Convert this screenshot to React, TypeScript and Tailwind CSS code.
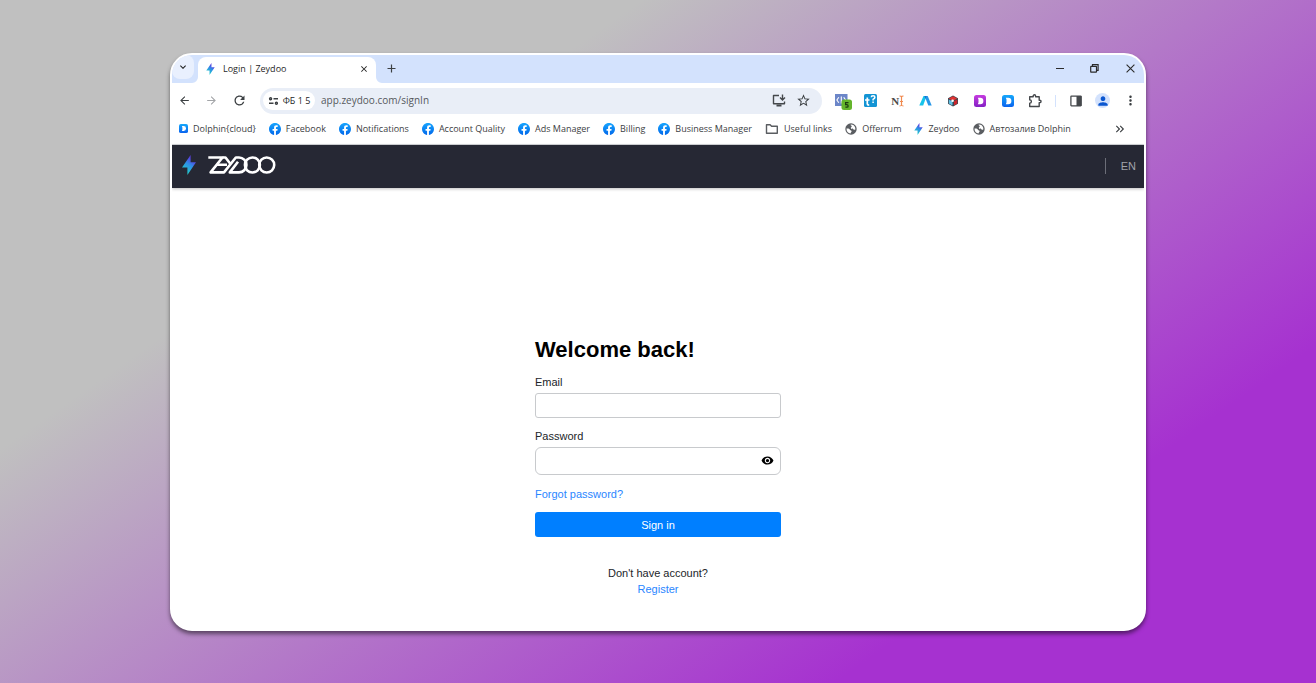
import { useState, type ReactNode } from "react";
import {
  MdArrowBack,
  MdArrowForward,
  MdClose,
  MdExpandMore,
  MdKeyboardDoubleArrowRight,
  MdMoreVert,
  MdPerson,
  MdRefresh,
  MdStarBorder,
  MdVisibility,
} from "react-icons/md";

function Bolt({ className }: { className: string }) {
  return (
    <svg viewBox="0 0 14 20" className={className} aria-hidden="true">
      <defs>
        <linearGradient id="bolt" x1="0.8" y1="0" x2="0.3" y2="1">
          <stop offset="0.2" stopColor="#5a3fe0" />
          <stop offset="0.5" stopColor="#2f8fe6" />
          <stop offset="1" stopColor="#1fd8c4" />
        </linearGradient>
      </defs>
      <path d="M8.6 0v7.2H14L5.4 20v-7.6H0z" fill="url(#bolt)" />
    </svg>
  );
}

function FacebookIcon() {
  return (
    <svg viewBox="0 0 512 512" className="size-3 shrink-0" aria-hidden="true">
      <defs>
        <linearGradient id="fb" x1="0" y1="0" x2="0" y2="1">
          <stop offset="0" stopColor="#18a5fe" />
          <stop offset="1" stopColor="#0168ea" />
        </linearGradient>
      </defs>
      <path
        fill="url(#fb)"
        d="M512 256C512 114.600 397.400 0 256 0S0 114.600 0 256c0 127.800 93.600 233.700 216 253V330h-65v-74h65v-56.400c0-64.200 38.200-99.600 96.700-99.600 28 0 57.300 5 57.300 5v63h-32.300c-31.800 0-41.700 19.700-41.700 40V256h71l-11.400 74H296v179c122.400-19.300 216-125.200 216-253z"
      />
    </svg>
  );
}

function GlobeIcon() {
  return (
    <svg viewBox="0 0 12 12" className="size-3 shrink-0" aria-hidden="true">
      <circle cx="6" cy="6" r="5.700" fill="#5a5d61" />
      <path d="M1.500 5.600c1.600-.3 3 .2 3.500 1.200.5.900 1.600.6 1.600 1.500 0 .8-1 .9-1 2.200C3 10.400 1.400 8.400 1.500 5.600z" fill="#fff" />
      <path d="M5.400 1.700c.2.900 1.400.7 1.300 1.700-.1.800-1 .5-.9 1.400.1.900 1.800.3 2.300 1.200.3.700.9 1 2.200.6C10.800 4 9 1.700 6.500 1.500z" fill="#fff" />
    </svg>
  );
}

function Wordmark() {
  return (
    <svg viewBox="0 0 68 18" className="h-[18px] w-[68px]" role="img" aria-label="ZEYDOO">
      <g fill="none" stroke="#fff" strokeWidth="2.600" strokeLinejoin="round">
        <path d="M0.300 1.500H14.500L2.600 16.400H16L27.800 1.500H31a7.450 7.450 0 0 1 0 14.900H21.800L30 5.800" />
        <path d="M9 8.700H19" />
        <path d="M14.500 1.500h3l5 6.500" />
        <circle cx="44.400" cy="9" r="7.500" />
        <circle cx="58.700" cy="9" r="7.500" />
      </g>
    </svg>
  );
}

function DolphinIcon({ className, tone }: { className: string; tone: "blue" | "purple" }) {
  return (
    <svg viewBox="0 0 12 12" className={className} aria-hidden="true">
      <defs>
        <linearGradient id={`dolphin-${tone}`} x1="0" y1="0" x2="0" y2="1">
          <stop offset="0" stopColor={tone === "blue" ? "#16a8fb" : "#c63be0"} />
          <stop offset="1" stopColor={tone === "blue" ? "#0a63ee" : "#8420c4"} />
        </linearGradient>
      </defs>
      <rect width="12" height="12" rx="2.500" fill={`url(#dolphin-${tone})`} />
      <path d="M3.800 2.800h2.400a3.200 3.200 0 0 1 0 6.400H3.800l.7-1.700v-3z" fill="#fff" />
    </svg>
  );
}

function FolderIcon() {
  return (
    <svg viewBox="0 0 14 12" className="h-3 w-[14px] shrink-0" fill="none" stroke="#5a5d61" strokeWidth="1.400" aria-hidden="true">
      <path d="M1.500 1.700h3.600l1.500 1.600h5.700v7H1.500z" strokeLinejoin="round" />
    </svg>
  );
}

function TuneIcon() {
  return (
    <svg viewBox="0 0 11 10" className="h-[10px] w-[11px]" fill="none" stroke="#3c4043" strokeWidth="1.400" aria-hidden="true">
      <circle cx="2.600" cy="2.700" r="1" />
      <path d="M5.500 2.700h4.500M1 7.300h4.500" />
      <circle cx="8.400" cy="7.300" r="1" />
    </svg>
  );
}

function InstallIcon() {
  return (
    <svg viewBox="0 0 14 13" className="h-[13px] w-[14px]" fill="none" stroke="#45484c" strokeWidth="1.400" aria-hidden="true">
      <path d="M7 1.500H1.500v8.300h11V7.600" strokeLinejoin="round" />
      <path d="M4.500 11.500h5" strokeWidth="2" />
      <path d="M10.500 0.500v5M8 3.600l2.500 2.500L13 3.600" />
    </svg>
  );
}

function CodeExtension() {
  return (
    <svg viewBox="0 0 18 18" className="size-[18px]" aria-hidden="true">
      <rect x="1" y="2" width="12.500" height="12" fill="#6c86c8" />
      <path d="M4.800 5.200L2.900 8l1.900 2.800M9.700 5.200L11.600 8l-1.900 2.800M7.300 4.500v7" fill="none" stroke="#fff" strokeWidth="1.100" />
      <rect x="7.500" y="7.500" width="10.500" height="10.500" rx="2.500" fill="#64b52c" />
      <path d="M14.500 10.700h-2.900v2h1.300a1.200 1.200 0 0 1 0 2.500h-1.500" fill="none" stroke="#1c3a10" strokeWidth="1.200" />
    </svg>
  );
}

function TranslateExtension() {
  return (
    <svg viewBox="0 0 13 13" className="size-[13px]" aria-hidden="true">
      <rect width="13" height="13" rx="1.500" fill="#1394d4" />
      <path d="M3.300 3.500v6.600q0 1 1.900 1M1 6h4.500" fill="none" stroke="#fff" strokeWidth="1.700" />
      <path d="M7.300 3.300q0-1.500 1.800-1.500t1.800 1.500q0 1-1.800 2v1.200M9.100 7.500V9" fill="none" stroke="#fff" strokeWidth="1.500" />
    </svg>
  );
}

function NotesExtension() {
  return (
    <span className="flex items-center">
      <span className="font-['Liberation_Serif',serif] text-[11px] leading-3 font-bold text-[#4a4a4a]">N</span>
      <svg viewBox="0 0 5 12" className="h-3 w-[5px]" fill="none" stroke="#f08a50" strokeWidth="1.200" aria-hidden="true">
        <path d="M0.500 1q1.800 0 2 1 .2-1 2-1M2.500 2v8M0.500 11q1.800 0 2-1 .2 1 2 1M1 6.500h3" />
      </svg>
    </span>
  );
}

function PeaksExtension() {
  return (
    <svg viewBox="0 0 13 11" className="h-[11px] w-[13px]" aria-hidden="true">
      <path d="M0.300 10.500L4.500 1h3L4.200 10.500z" fill="#16c3ea" />
      <path d="M5.500 1h3.200l4 9.500H9.300z" fill="#2596e8" />
      <path d="M5.500 1h2l-1 3z" fill="#1a6fd0" />
    </svg>
  );
}

function CubeExtension() {
  return (
    <svg viewBox="0 0 12 12" className="size-3" aria-hidden="true">
      <path d="M6 0.500l5 2.700v5.600L6 11.500 1 8.800V3.200z" fill="#3b4650" />
      <path d="M6 1.200l4.300 2.300L6 5.800 1.700 3.500z" fill="#e03232" />
      <path d="M1.800 4.500l3.700 2v3.900L1.800 8.400z" fill="#62c2e6" />
      <path d="M10.300 4.500v4l-3.300 1.900V6.300z" fill="#c9262c" />
      <circle cx="5.600" cy="5.800" r="1.300" fill="#fff" />
    </svg>
  );
}

function PuzzleIcon() {
  return (
    <svg viewBox="0 0 14 14" className="size-[14px]" fill="none" stroke="#45484c" strokeWidth="1.400" strokeLinejoin="round" aria-hidden="true">
      <path d="M1.700 2.700h3.500V2a1.200 1.200 0 0 1 2.400 0v.7h3.600v3.500h.6a1.200 1.200 0 0 1 0 2.400h-.6v3.900H1.700V9.300a1.700 1.700 0 0 0 0-3.400z" />
    </svg>
  );
}

function SidePanelIcon() {
  return (
    <svg viewBox="0 0 12 12" className="size-3" aria-hidden="true">
      <rect x="0.900" y="1.200" width="10.200" height="9.600" rx="0.500" fill="none" stroke="#45484c" strokeWidth="1.300" />
      <rect x="6.500" y="1" width="5" height="10" fill="#45484c" />
    </svg>
  );
}

function RestoreIcon() {
  return (
    <svg viewBox="0 0 9 9" className="size-[9px]" fill="none" stroke="#2b2b2b" strokeWidth="1.200" aria-hidden="true">
      <rect x="0.700" y="2.400" width="5.800" height="5.800" rx="0.500" />
      <path d="M2.500 2.200V0.700h5.600v5.600H6.700" />
    </svg>
  );
}

function IconButton({ label, className = "", children }: { label: string; className?: string; children: ReactNode }) {
  return (
    <button type="button" aria-label={label} className={`flex items-center justify-center ${className}`}>
      {children}
    </button>
  );
}

const bookmarks: { name: string; icon: ReactNode }[] = [
  { name: "Dolphin{cloud}", icon: <DolphinIcon tone="blue" className="size-[9px] shrink-0" /> },
  { name: "Facebook", icon: <FacebookIcon /> },
  { name: "Notifications", icon: <FacebookIcon /> },
  { name: "Account Quality", icon: <FacebookIcon /> },
  { name: "Ads Manager", icon: <FacebookIcon /> },
  { name: "Billing", icon: <FacebookIcon /> },
  { name: "Business Manager", icon: <FacebookIcon /> },
  { name: "Useful links", icon: <FolderIcon /> },
  { name: "Offerrum", icon: <GlobeIcon /> },
  { name: "Zeydoo", icon: <Bolt className="h-3 w-[9px] shrink-0" /> },
  { name: "Автозалив Dolphin", icon: <GlobeIcon /> },
];

const extensions: { name: string; icon: ReactNode }[] = [
  { name: "Code", icon: <CodeExtension /> },
  { name: "Translate", icon: <TranslateExtension /> },
  { name: "Notes", icon: <NotesExtension /> },
  { name: "Peaks", icon: <PeaksExtension /> },
  { name: "Cube", icon: <CubeExtension /> },
  { name: "Dolphin purple", icon: <DolphinIcon tone="purple" className="size-3" /> },
  { name: "Dolphin blue", icon: <DolphinIcon tone="blue" className="size-3" /> },
  { name: "Extensions", icon: <PuzzleIcon /> },
];

function TabStrip() {
  return (
    <div className="flex h-7 items-stretch bg-[#d3e2fd]">
      <div className="flex w-[26px] pb-1">
        <IconButton label="Search tabs" className="w-[22px] rounded-lg bg-[#e9f0fe]">
          <MdExpandMore className="size-3 text-[#1f1f1f]" />
        </IconButton>
      </div>
      <div className="relative mt-[2px] flex w-[178px] items-center rounded-t-lg bg-white pr-[7px] pb-[3px] pl-2">
        <svg viewBox="0 0 6 6" className="absolute bottom-0 -left-[6px] size-[6px]" aria-hidden="true">
          <path d="M6 0v6H0a6 6 0 0 0 6-6z" fill="#fff" />
        </svg>
        <svg viewBox="0 0 6 6" className="absolute -right-[6px] bottom-0 size-[6px]" aria-hidden="true">
          <path d="M0 0v6h6a6 6 0 0 1-6-6z" fill="#fff" />
        </svg>
        <Bolt className="h-3 w-[9px]" />
        <span className="ml-2 flex-1 text-[9px] text-[#1f1f1f]">Login | Zeydoo</span>
        <IconButton label="Close tab">
          <MdClose className="size-[10px] text-[#1f1f1f]" />
        </IconButton>
      </div>
      <IconButton label="New tab" className="ml-[7px] w-4 pb-[2px]">
        <svg viewBox="0 0 9 9" className="size-[9px]" stroke="#3c4043" strokeWidth="1.200" aria-hidden="true">
          <path d="M4.500 0.500v8M0.500 4.500h8" />
        </svg>
      </IconButton>
      <div className="ml-auto flex pb-[2px]">
        <IconButton label="Minimize" className="w-[35px]">
          <svg viewBox="0 0 8 8" className="size-2" stroke="#2b2b2b" strokeWidth="1.200" aria-hidden="true">
            <path d="M0 4.500h8" />
          </svg>
        </IconButton>
        <IconButton label="Restore" className="w-[35px]">
          <RestoreIcon />
        </IconButton>
        <IconButton label="Close window" className="w-8 pl-1">
          <svg viewBox="0 0 9 9" className="size-[9px]" stroke="#2b2b2b" strokeWidth="1.100" aria-hidden="true">
            <path d="M0.600 0.600l7.800 7.800M8.400 0.600L0.600 8.400" />
          </svg>
        </IconButton>
      </div>
    </div>
  );
}

function Toolbar() {
  return (
    <div className="flex h-[35px] items-center">
      <IconButton label="Back" className="w-[25px]">
        <MdArrowBack className="size-[13px] text-[#3c4043]" />
      </IconButton>
      <IconButton label="Forward" className="w-7">
        <MdArrowForward className="size-[13px] text-[#a3a5a8]" />
      </IconButton>
      <IconButton label="Reload" className="w-7">
        <MdRefresh className="size-[15px] text-[#3c4043]" />
      </IconButton>
      <div className="ml-[7px] flex h-[26px] min-w-0 flex-1 items-center rounded-full bg-[#e9eef7] px-[3px]">
        <button type="button" className="flex h-[19px] w-[52px] items-center justify-center gap-[4px] rounded-full bg-white text-[9px] whitespace-nowrap text-[#1f1f1f]">
          <TuneIcon />
          ФБ 1 5
        </button>
        <input
          aria-label="Address"
          defaultValue="app.zeydoo.com/signIn"
          className="ml-[6px] min-w-0 flex-1 bg-transparent text-[10px] text-[#55585c] outline-none"
        />
        <IconButton label="Install app" className="w-[25px]">
          <InstallIcon />
        </IconButton>
        <IconButton label="Bookmark this page" className="mr-[3px] w-[25px]">
          <MdStarBorder className="size-[15px] text-[#3c4043]" />
        </IconButton>
      </div>
      <div className="ml-[7px] grid w-[220px] grid-cols-8">
        {extensions.map((e) => (
          <IconButton key={e.name} label={e.name} className="h-6">
            {e.icon}
          </IconButton>
        ))}
      </div>
      <div className="ml-[6px] h-3 w-px bg-[#d3e2fd]" />
      <div className="ml-[6px] grid w-[82px] grid-cols-3">
        <IconButton label="Side panel">
          <SidePanelIcon />
        </IconButton>
        <IconButton label="Profile">
          <span className="flex size-[15px] items-center justify-center rounded-full bg-[#d3e2fd]">
            <MdPerson className="size-[14px] text-[#0b57d0]" />
          </span>
        </IconButton>
        <IconButton label="Menu">
          <MdMoreVert className="size-[15px] text-[#3c4043]" />
        </IconButton>
      </div>
    </div>
  );
}

function BookmarksBar() {
  return (
    <nav aria-label="Bookmarks" className="flex h-[27px] items-center border-b border-[#d5d7da] pr-[17px] pb-[5px] pl-[7px]">
      <ul className="flex min-w-0 flex-1 items-center gap-[13px] overflow-hidden">
        {bookmarks.map((b) => (
          <li key={b.name}>
            <a href="#" className="flex items-center gap-[5px] text-[9px] whitespace-nowrap text-[#3c4043]">
              {b.icon}
              {b.name}
            </a>
          </li>
        ))}
      </ul>
      <IconButton label="More bookmarks">
        <MdKeyboardDoubleArrowRight className="size-[14px] text-[#3c4043]" />
      </IconButton>
    </nav>
  );
}

function SignInForm() {
  const [visible, setVisible] = useState(false);
  return (
    <form onSubmit={(e) => e.preventDefault()} className="mx-auto mt-[148px] flex w-[246px] flex-col text-[11px] leading-4 text-[#212529]">
      <h1 className="text-[22px] leading-7 font-bold text-black">Welcome back!</h1>
      <label htmlFor="email" className="mt-[10px]">
        Email
      </label>
      <input id="email" type="email" className="mt-[3px] h-[25px] rounded-[3px] border border-[#c8cacd] px-2 outline-none" />
      <label htmlFor="password" className="mt-[10px]">
        Password
      </label>
      <div className="mt-[3px] flex h-7 items-center rounded-md border border-[#c8cacd] pr-[6px] pl-2">
        <input id="password" type={visible ? "text" : "password"} className="min-w-0 flex-1 outline-none" />
        <button type="button" aria-label="Show password" onClick={() => setVisible(!visible)} className="pb-[2px]">
          <MdVisibility className="size-[13px] text-black" />
        </button>
      </div>
      <a href="#" className="mt-[11px] self-start text-[#2a86ff]">
        Forgot password?
      </a>
      <button type="submit" className="mt-[10px] h-[25px] rounded-[3px] bg-[#007fff] text-white">
        Sign in
      </button>
      <p className="mt-7 text-center">Don't have account?</p>
      <a href="#" className="self-center text-[#2a86ff]">
        Register
      </a>
    </form>
  );
}

export default function App() {
  return (
    <div className="flex min-h-screen bg-[linear-gradient(145deg,#c0c0c0_28%,#a631d0_79%)] px-[170px] pt-[53px] pb-[52px]">
      <div className="flex min-w-0 flex-1 flex-col overflow-hidden rounded-[22px] border-2 border-white bg-white font-['Open_Sans',sans-serif] shadow-[0_3px_4px_rgba(0,0,0,0.5)]">
        <TabStrip />
        <Toolbar />
        <BookmarksBar />
        <div className="flex flex-1 flex-col font-['Liberation_Sans',Arial,sans-serif]">
          <header className="flex h-[43px] items-center bg-[#262834] pr-2 pb-[3px] pl-[10px] shadow-[0_1px_3px_rgba(0,0,0,0.25)]">
            <Bolt className="h-5 w-[14px]" />
            <div className="ml-3">
              <Wordmark />
            </div>
            <button type="button" className="mt-[2px] ml-auto border-l border-[#6c6e78] pl-[15px] text-[11px] leading-4 text-[#a0a2aa]">
              EN
            </button>
          </header>
          <main className="flex-1">
            <SignInForm />
          </main>
        </div>
      </div>
    </div>
  );
}
